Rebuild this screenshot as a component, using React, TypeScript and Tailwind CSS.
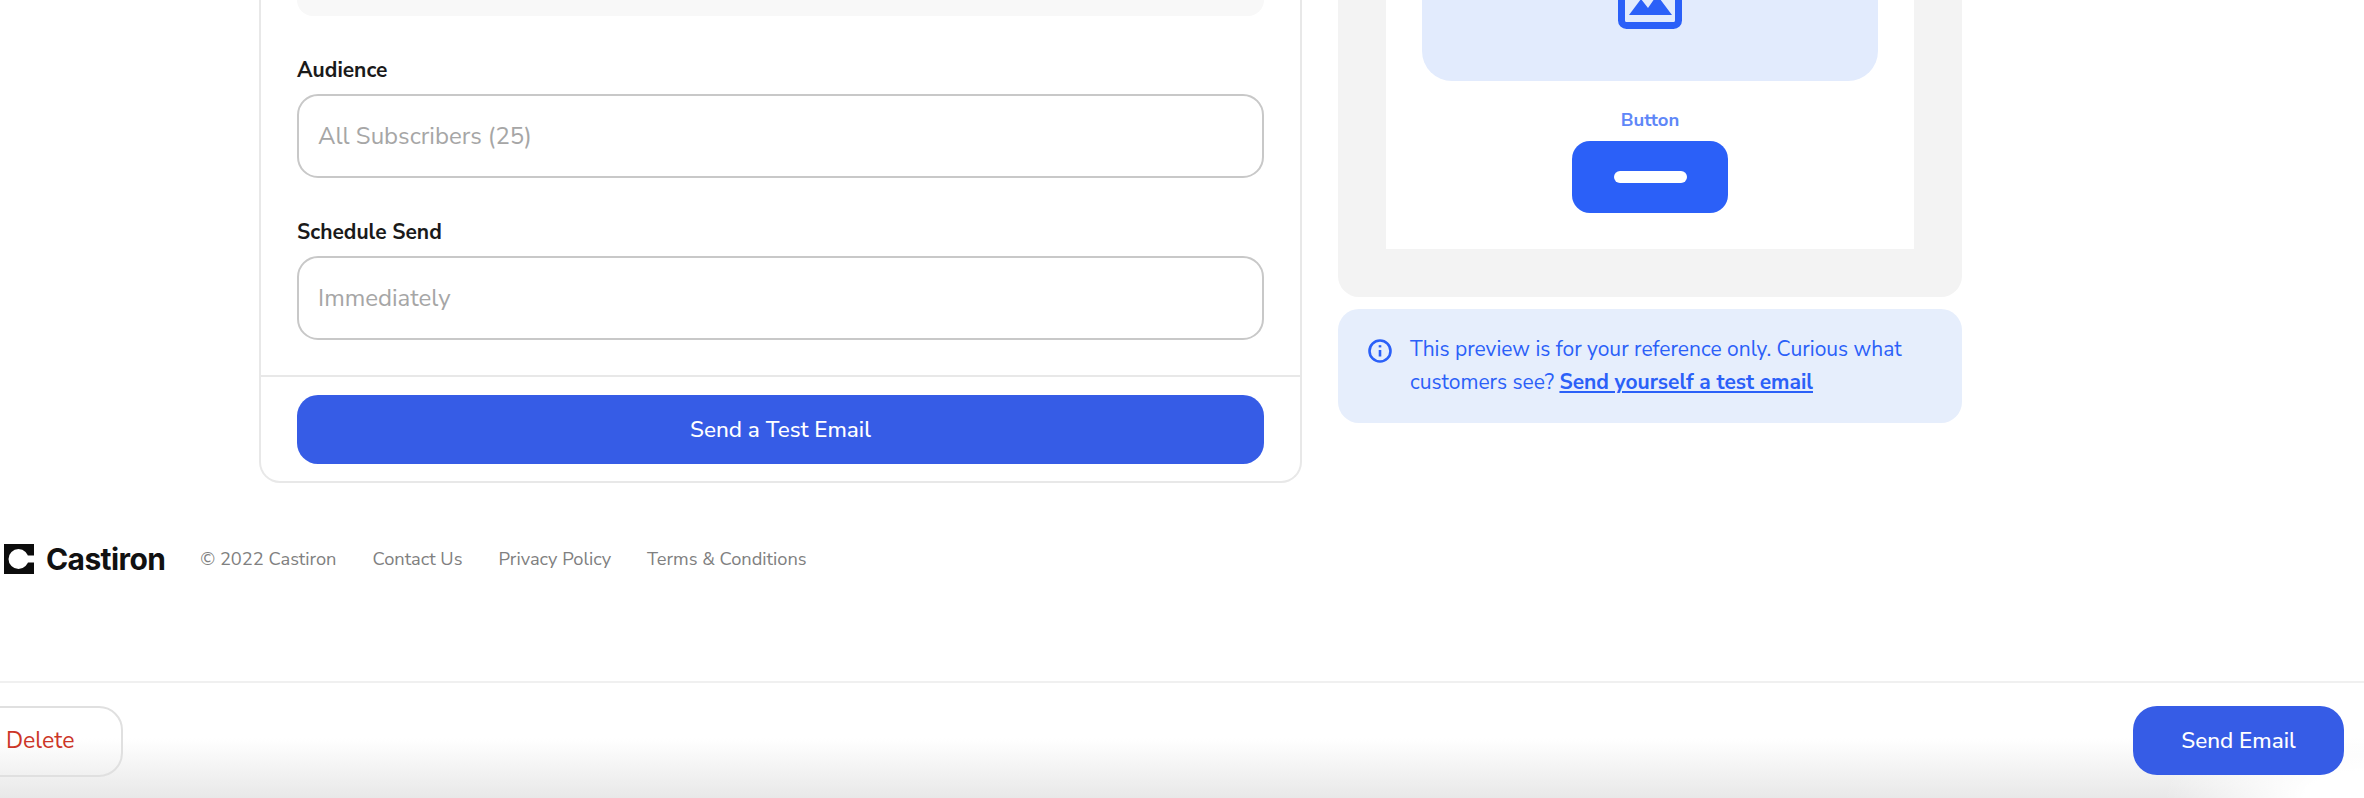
const FONT = "font-['Nunito_Sans','Noto_Sans',sans-serif]"

function Field({ label, value }: { label: string; value: string }) {
  return (
    <div className="mt-[39px]">
      <div className="mb-[9px] text-[21px] leading-[30px] font-bold text-[#1a1a1a]">{label}</div>
      <div className="flex h-[84px] items-center rounded-[21px] border-2 border-[#c8c8c8] px-[19px] text-[24px] text-[#a6a6a6]">
        {value}
      </div>
    </div>
  )
}

export default function App() {
  return (
    <div className={`flex h-[798px] w-[2364px] flex-col overflow-hidden bg-white ${FONT}`}>
      <main className="flex items-start gap-[36px] pl-[259px]">
        {/* Form card */}
        <section className="w-[1043px] rounded-b-[21px] border-x-2 border-b-2 border-[#e8e8e8]">
          <div className="px-[36px]">
            <div className="h-[16px] rounded-b-[21px] bg-[#f8f8f8]" />
            <Field label="Audience" value="All Subscribers (25)" />
            <Field label="Schedule Send" value="Immediately" />
          </div>
          <div className="mt-[35px] border-t-2 border-[#e8e8e8] px-[36px] pt-[18px] pb-[17px]">
            <button className="h-[69px] w-full rounded-[21px] bg-[#365ce6] text-[22.5px] font-medium text-white">
              Send a Test Email
            </button>
          </div>
        </section>

        {/* Preview */}
        <aside className="flex w-[624px] flex-col gap-[12px]">
          <div className="rounded-b-[21px] bg-[#f3f3f3] px-[48px] pb-[48px]">
            <div className="flex h-[249px] flex-col items-center bg-white px-[36px]">
              <div className="flex h-[81px] w-full items-start justify-center rounded-b-[30px] bg-[#e2ebfd]">
                <svg className="-mt-[35px]" width="64" height="64" viewBox="0 0 64 64" fill="none">
                  <rect x="3.5" y="3.5" width="57" height="57" rx="5" stroke="#2b60f8" strokeWidth="7" />
                  <path d="M11 50 L23 34 L30 43 L39 30 L54 50 Z" fill="#2b60f8" />
                </svg>
              </div>
              <div className="mt-[27px] mb-[9px] text-[18.5px] leading-[24px] font-bold text-[#5f87f8]">Button</div>
              <div className="flex h-[72px] w-[156px] items-center justify-center rounded-[18px] bg-[#2b60f8]">
                <div className="h-[12px] w-[73px] rounded-full bg-white" />
              </div>
            </div>
          </div>
          <div className="flex gap-[18px] rounded-[21px] bg-[#e6eefc] px-[30px] py-[24px]">
            <svg className="mt-[6px] shrink-0" width="24" height="24" viewBox="0 0 24 24" fill="none" stroke="#2b60f8" strokeWidth="2.6">
              <circle cx="12" cy="12" r="10.5" />
              <path d="M12 11v6.5" />
              <path d="M12 6.2v2.2" />
            </svg>
            <p className="text-[21px] leading-[33px] text-[#2b60f8]">
              This preview is for your reference only. Curious what
              <br />
              customers see? <a className="font-bold underline">Send yourself a test email</a>
            </p>
          </div>
        </aside>
      </main>

      {/* Site footer */}
      <footer className="mt-[61px] flex h-[30px] items-center pl-[4px] text-[18.3px] text-[#808080]">
        <svg width="30" height="30" viewBox="0 0 30 30">
          <rect width="30" height="30" fill="#0c0c0c" />
          <circle cx="14.5" cy="15" r="10" fill="#fff" />
          <rect x="20" y="11.5" width="10" height="7" fill="#fff" />
        </svg>
        <span className="ml-[12px] font-['Inter',sans-serif] text-[30px] leading-none font-bold tracking-[-0.6px] text-[#111]">Castiron</span>
        <span className="ml-[35px] translate-y-[1px]">© 2022 Castiron</span>
        <a className="ml-[36px] translate-y-[1px]">Contact Us</a>
        <a className="ml-[36px] translate-y-[1px]">Privacy Policy</a>
        <a className="ml-[36px] translate-y-[1px]">Terms &amp; Conditions</a>
      </footer>

      {/* Action bar */}
      <div className="mt-[107px] flex flex-1 items-start justify-between border-t-2 border-[#f0f0f0] bg-[radial-gradient(ellipse_200px_90px_at_100%_100%,white_30%,transparent),linear-gradient(to_bottom,white_48%,#e8e8e8)] pt-[23px] pr-[20px]">
        <button className="-ml-[30px] h-[71px] w-[153px] rounded-[24px] border-2 border-[#e0e0e0] pl-[34px] text-left text-[23px] text-[#cc3527]">
          Delete
        </button>
        <button className="h-[69px] w-[211px] rounded-[24px] bg-[#365ce6] text-[22.5px] font-medium text-white">
          Send Email
        </button>
      </div>
    </div>
  )
}
